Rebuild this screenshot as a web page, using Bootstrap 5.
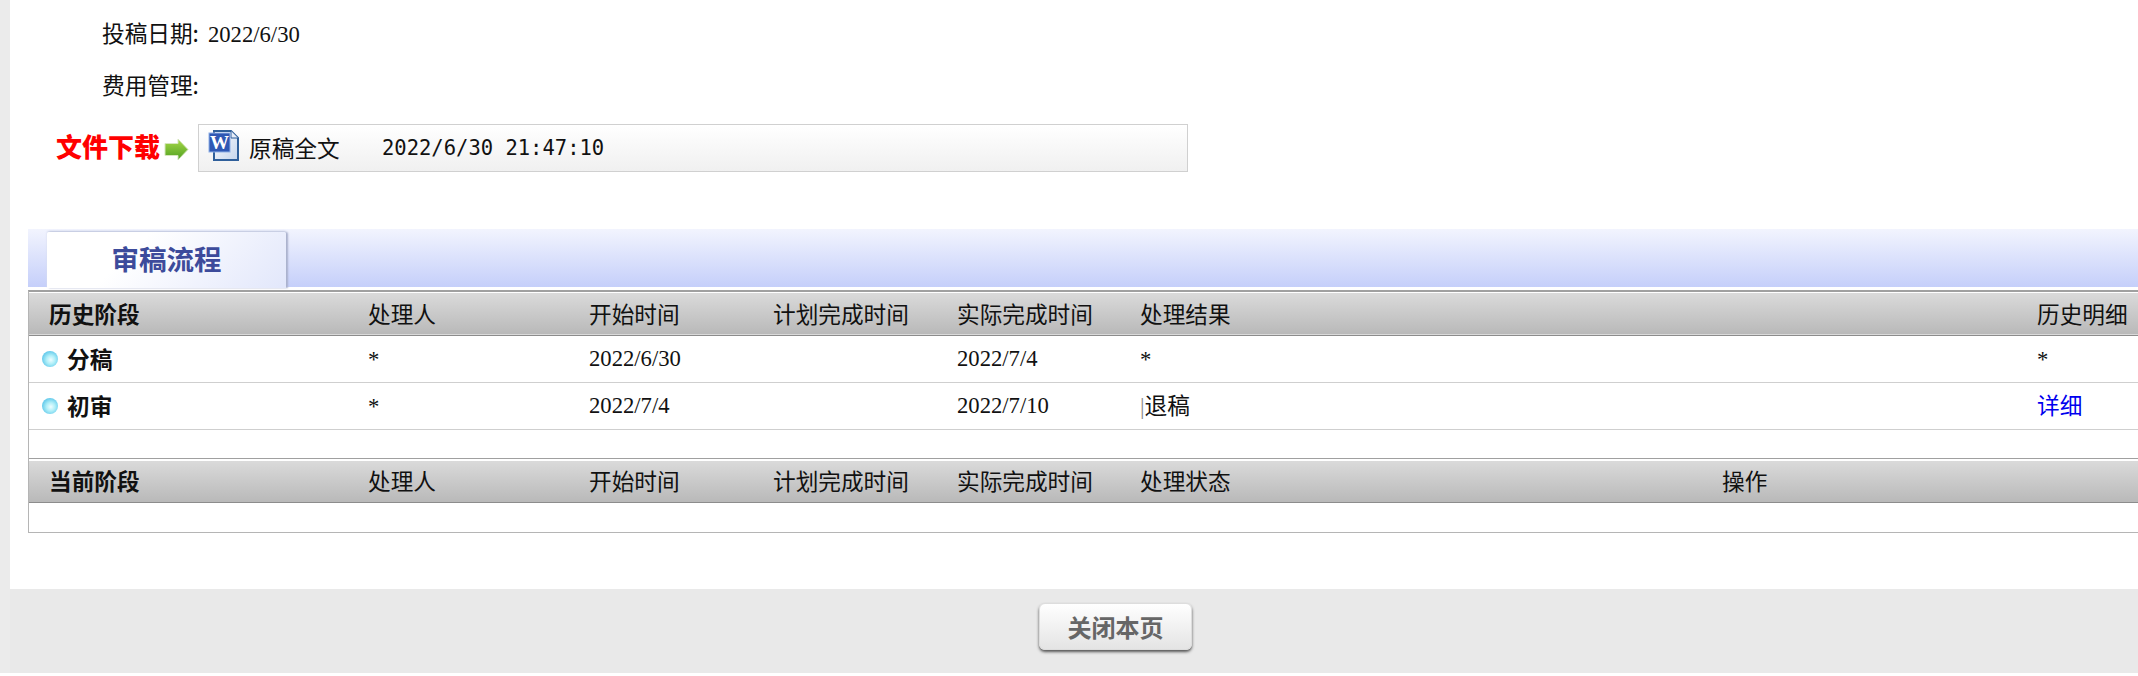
<!DOCTYPE html>
<html lang="zh-CN">
<head>
    <meta charset="UTF-8">
    <meta name="viewport" content="width=device-width, initial-scale=1.0">
    <title>审稿流程</title>
    <link href="https://cdn.jsdelivr.net/npm/bootstrap@5.3.2/dist/css/bootstrap.min.css" rel="stylesheet">
    <script src="https://cdn.jsdelivr.net/npm/bootstrap@5.3.2/dist/js/bootstrap.bundle.min.js"></script>
    <style>
        html, body { height: 676px; overflow: hidden; background: #fff; }
        body { font-family: "Liberation Serif", "Noto Sans CJK SC", serif; font-size: 22.67px; color: #111; }
        .cn { font-family: "Noto Sans CJK SC", sans-serif; font-weight: 400; }
        .page-wrap { border-left: 10px solid #ebebeb; height: 673px; }
        .info-line { height: 52px; padding-left: 92px; line-height: 52px; }
        .info-line .cn { margin-right: 9px; }
        .info-first { padding-top: 7px; height: 59px; }
        .file-row { margin-top: 13px; height: 48px; }
        .file-tag { width: 188px; padding-left: 46px; padding-bottom: 5px; flex-shrink: 0; }
        .file-tag b { font-family: "Noto Sans CJK SC", sans-serif; font-size: 26px; line-height: 40px; color: #f00; font-weight: 900; white-space: nowrap; }
        .file-tag svg { margin-top: 7px; }
        .file-box { width: 990px; border: 1px solid #d0d0d0; background: linear-gradient(#fff, #f0f0f0); }
        .file-box svg { margin: 0 0 6px 9px; }
        .file-name { margin-left: 9px; width: 133px; }
        .file-time { font-family: "DejaVu Sans Mono", monospace; font-size: 20.5px; }
        .band { margin: 57px 0 0 18px; height: 58px; padding: 3px 0 0 19px; background: linear-gradient(#f2f4fe, #c5cffa); }
        .band-tab { width: 239px; height: 56px; text-align: center; line-height: 52px; font-family: "Noto Sans CJK SC", sans-serif; font-weight: 700; font-size: 27.5px; color: #3d4b9b; background: linear-gradient(135deg, #fff 35%, #e2e7fb); box-shadow: 2px 0 2px #a9b0cc, 0 -1px 2px #cdd3e6, 0 1px 1px #fff; border-radius: 2px 2px 0 0; }
        .flow-panel { margin: 3px 0 0 18px; border-left: 1px solid #b5b5b5; border-bottom: 1px solid #b5b5b5; border-top: 2px solid #a0a0a0; padding-top: 1px; height: 243px; }
        .table.flow-table { table-layout: fixed; width: 2109px; margin: 0; }
        .table.flow-table > * > * > * { padding: 0; border: 0; background: transparent; box-shadow: none; vertical-align: middle; font-weight: 400; color: #111; }
        .flow-table thead tr { height: 42px; background: linear-gradient(#dadada, #b9b9b9); border-bottom: 1px solid #8c8c8c; }
        .table.flow-table > thead > tr > th { font-family: "Noto Sans CJK SC", sans-serif; line-height: 30px; white-space: nowrap; }
        .table.flow-table > thead > tr > th:first-child { padding-left: 20px; font-weight: 700; }
        .flow-table tbody tr { height: 47px; border-bottom: 1px solid #cfcfcf; }
        .stage-name { padding-left: 13px; gap: 9px; }
        .stage-name b { font-family: "Noto Sans CJK SC", sans-serif; font-weight: 700; line-height: 30px; }
        .stage-dot { width: 16px; height: 16px; border-radius: 50%; background: radial-gradient(circle at 55% 55%, #effdff 0, #aeeef8 35%, #5cc6ea 75%, #a5dff2 100%); }
        .star { position: relative; top: 1px; }
        .pipe { color: #888; font-weight: 300; }
        .table.flow-table a { color: #00e; text-decoration: none; }
        .gap-row { height: 29px; border-bottom: 1px solid #a0a0a0; margin-bottom: 2px; }
        .page-foot { margin-top: 56px; height: 84px; padding: 14px 0 0 83px; background: #e9e9e9; text-align: center; }
        .close-btn { width: 153px; height: 47px; padding: 0; border: 1px solid #ddd; border-radius: 6px; font-family: "Noto Sans CJK SC", sans-serif; font-size: 24px; font-weight: 700; line-height: 42px; color: #666; background: linear-gradient(#fff, #e4e4e4); box-shadow: 0 2px 3px #555; }
    </style>
</head>
<body>
    <div class="page-wrap">
        <!-- info lines -->
        <div class="info-line info-first"><span class="cn">投稿日期:</span>2022/6/30</div>
        <div class="info-line"><span class="cn">费用管理:</span></div>

        <!-- file download -->
        <div class="file-row d-flex">
            <div class="file-tag d-flex align-items-center">
                <b>文件下载</b>
                <svg class="ms-1" width="25" height="23" viewBox="0 0 25 23">
                    <defs><linearGradient id="arrowFill" x1="0" y1="0" x2="0" y2="1"><stop offset="0" stop-color="#a8d848"/><stop offset="1" stop-color="#4ea020"/></linearGradient></defs>
                    <path d="M1 5.500h13V1l10 10.500L14 22v-4.500H1z" fill="url(#arrowFill)" stroke="#d6e6bd"/>
                </svg>
            </div>
            <div class="file-box d-flex align-items-center">
                <svg width="32" height="31" viewBox="0 0 32 31">
                    <defs><linearGradient id="docFill" x1="0" y1="0" x2="1" y2="1"><stop offset="0" stop-color="#fff"/><stop offset="1" stop-color="#c5d5ec"/></linearGradient></defs>
                    <path d="M6 1h17l7 7v22H6z" fill="url(#docFill)" stroke="#2f5f9a" stroke-width="2"/>
                    <path d="M23 1v7h7" fill="#e8eef8" stroke="#2f5f9a"/>
                    <rect x="1" y="3" width="21" height="19" fill="#2f58b4" stroke="#8fb0e6"/>
                    <text x="11.500" y="19" text-anchor="middle" font-family="Liberation Serif" font-weight="700" font-size="19" fill="#fff">W</text>
                </svg>
                <span class="cn file-name">原稿全文</span>
                <span class="file-time">2022/6/30 21:47:10</span>
            </div>
        </div>

        <!-- review flow -->
        <div class="band"><div class="band-tab">审稿流程</div></div>
        <div class="flow-panel">
            <table class="table flow-table">
                <colgroup>
                    <col style="width:339px"><col style="width:221px"><col style="width:184px"><col style="width:184px"><col style="width:183px"><col style="width:897px"><col>
                </colgroup>
                <thead>
                    <tr><th>历史阶段</th><th>处理人</th><th>开始时间</th><th>计划完成时间</th><th>实际完成时间</th><th>处理结果</th><th>历史明细</th></tr>
                </thead>
                <tbody>
                    <tr>
                        <td><div class="stage-name d-flex align-items-center"><span class="stage-dot"></span><b>分稿</b></div></td>
                        <td><span class="star">*</span></td><td>2022/6/30</td><td></td><td>2022/7/4</td><td><span class="star">*</span></td><td><span class="star">*</span></td>
                    </tr>
                    <tr>
                        <td><div class="stage-name d-flex align-items-center"><span class="stage-dot"></span><b>初审</b></div></td>
                        <td><span class="star">*</span></td><td>2022/7/4</td><td></td><td>2022/7/10</td><td><span class="pipe">|</span><span class="cn">退稿</span></td><td><a class="cn" href="#">详细</a></td>
                    </tr>
                </tbody>
            </table>
            <div class="gap-row"></div>
            <table class="table flow-table">
                <colgroup>
                    <col style="width:339px"><col style="width:221px"><col style="width:184px"><col style="width:184px"><col style="width:183px"><col style="width:582px"><col>
                </colgroup>
                <thead>
                    <tr><th>当前阶段</th><th>处理人</th><th>开始时间</th><th>计划完成时间</th><th>实际完成时间</th><th>处理状态</th><th>操作</th></tr>
                </thead>
            </table>
        </div>

        <!-- footer -->
        <div class="page-foot"><button type="button" class="btn close-btn">关闭本页</button></div>
    </div>
</body>
</html>
